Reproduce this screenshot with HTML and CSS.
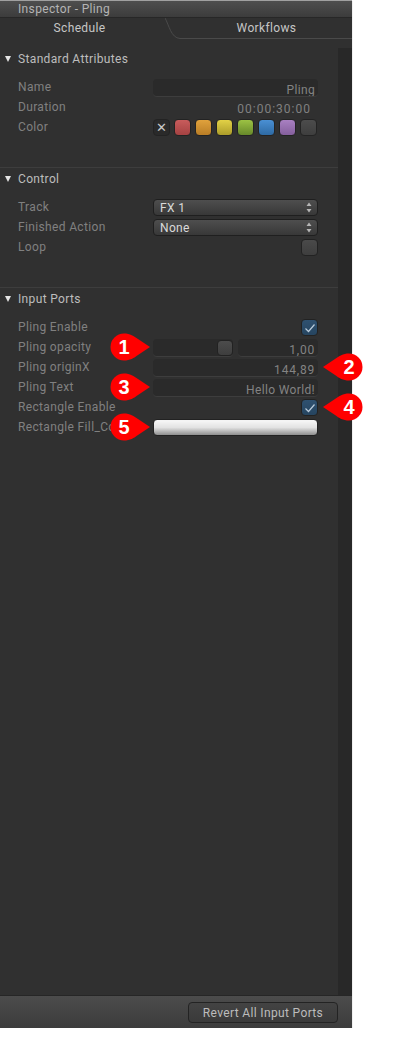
FILE: index.html
```html
<!DOCTYPE html>
<html lang="en">
<head>
  <meta charset="UTF-8">
  <meta name="viewport" content="width=device-width, initial-scale=1.0">
  <title>Inspector - Pling</title>
  <link rel="stylesheet" href="styles.css">
</head>
<body>

<div class="panel">
  <div class="titlebar">Inspector - Pling</div>

  <div class="tabs">
    <div class="tab tab-active">Schedule</div>
    <svg class="tab-curve" width="16" height="21" viewBox="0 0 16 21"><path d="M0 0 C4 7 6 20 15 20.5 L16 20.5" fill="none" stroke="#4a4a4a"/></svg>
    <div class="tab tab-other">Workflows</div>
  </div>

  <div class="content">
    <div class="main">
      <section class="section">
        <h3 class="section-head"><span class="arrow"></span>Standard Attributes</h3>
        <div class="row">
          <span class="label">Name</span>
          <div class="field">Pling</div>
        </div>
        <div class="row">
          <span class="label">Duration</span>
          <div class="timecode">00:00:30:00</div>
        </div>
        <div class="row">
          <span class="label">Color</span>
          <div class="swatches">
            <div class="swatch swatch-none">✕</div>
            <div class="swatch swatch-red"></div>
            <div class="swatch swatch-orange"></div>
            <div class="swatch swatch-yellow"></div>
            <div class="swatch swatch-green"></div>
            <div class="swatch swatch-blue"></div>
            <div class="swatch swatch-purple"></div>
            <div class="swatch swatch-gray"></div>
          </div>
        </div>
      </section>

      <section class="section">
        <h3 class="section-head"><span class="arrow"></span>Control</h3>
        <div class="row">
          <span class="label">Track</span>
          <div class="select">FX 1
            <svg class="updown" width="6" height="11" viewBox="0 0 6 11"><path d="M3 0.5 L5.5 4 H0.5 Z M3 10.5 L5.5 7 H0.5 Z" fill="#b5b5b5"/></svg>
          </div>
        </div>
        <div class="row">
          <span class="label">Finished Action</span>
          <div class="select">None
            <svg class="updown" width="6" height="11" viewBox="0 0 6 11"><path d="M3 0.5 L5.5 4 H0.5 Z M3 10.5 L5.5 7 H0.5 Z" fill="#b5b5b5"/></svg>
          </div>
        </div>
        <div class="row">
          <span class="label">Loop</span>
          <div class="check"></div>
        </div>
      </section>

      <section class="section section-last">
        <h3 class="section-head"><span class="arrow"></span>Input Ports</h3>
        <div class="row">
          <span class="label">Pling Enable</span>
          <div class="check check-on">
            <svg width="12" height="10" viewBox="0 0 12 10"><path d="M1.5 5.5 L4.5 8.5 L10.5 1.5" fill="none" stroke="#b9cbdb" stroke-width="1.2"/></svg>
          </div>
        </div>
        <div class="row">
          <span class="label">Pling opacity</span>
          <div class="slider">
            <div class="slider-track"><div class="slider-thumb"></div></div>
            <div class="field field-value field-num">1,00</div>
          </div>
        </div>
        <div class="row">
          <span class="label">Pling originX</span>
          <div class="field field-num">144,89</div>
        </div>
        <div class="row">
          <span class="label">Pling Text</span>
          <div class="field">Hello World!</div>
        </div>
        <div class="row">
          <span class="label">Rectangle Enable</span>
          <div class="check check-on">
            <svg width="12" height="10" viewBox="0 0 12 10"><path d="M1.5 5.5 L4.5 8.5 L10.5 1.5" fill="none" stroke="#b9cbdb" stroke-width="1.2"/></svg>
          </div>
        </div>
        <div class="row">
          <span class="label">Rectangle Fill_Color</span>
          <div class="fill-color"></div>
        </div>
      </section>
    </div>
    <div class="scrollbar"></div>
  </div>

  <div class="footer">
    <button class="revert" type="button">Revert All Input Ports</button>
  </div>
</div>

<!-- numbered callouts over the screenshot -->
<div class="callout callout-1"><svg width="42" height="28" viewBox="0 0 42 28"><path d="M14 0.5 C20 0.5 24 3 28 6 L40 14 L28 22 C24 25 20 27.5 14 27.5 A13.5 13.5 0 0 1 14 0.5 Z" fill="#f00"/></svg><span>1</span></div>
<div class="callout callout-2 callout-flip"><svg width="42" height="28" viewBox="0 0 42 28"><path d="M28 0.5 C22 0.5 18 3 14 6 L2 14 L14 22 C18 25 22 27.5 28 27.5 A13.5 13.5 0 0 0 28 0.5 Z" fill="#f00"/></svg><span>2</span></div>
<div class="callout callout-3"><svg width="42" height="28" viewBox="0 0 42 28"><path d="M14 0.5 C20 0.5 24 3 28 6 L40 14 L28 22 C24 25 20 27.5 14 27.5 A13.5 13.5 0 0 1 14 0.5 Z" fill="#f00"/></svg><span>3</span></div>
<div class="callout callout-4 callout-flip"><svg width="42" height="28" viewBox="0 0 42 28"><path d="M28 0.5 C22 0.5 18 3 14 6 L2 14 L14 22 C18 25 22 27.5 28 27.5 A13.5 13.5 0 0 0 28 0.5 Z" fill="#f00"/></svg><span>4</span></div>
<div class="callout callout-5"><svg width="42" height="28" viewBox="0 0 42 28"><path d="M14 0.5 C20 0.5 24 3 28 6 L40 14 L28 22 C24 25 20 27.5 14 27.5 A13.5 13.5 0 0 1 14 0.5 Z" fill="#f00"/></svg><span>5</span></div>

</body>
</html>
```

FILE: styles.css
```css
/* Inspector panel */
body {
  margin: 0;
  background: #fff;
  font-family: Roboto, "Liberation Sans", sans-serif;
  font-size: 12px;
  letter-spacing: 0.35px;
}
.panel {
  width: 352px;
  height: 1028px;
  display: flex;
  flex-direction: column;
  background: #303030;
  box-shadow: 0 1px 1px rgba(0, 0, 0, 0.35);
}
.titlebar {
  height: 16px;
  line-height: 16px;
  padding-left: 18px;
  border-top: 1px solid #a0a0a0;
  background: linear-gradient(#4e4e4e, #3c3c3c);
  color: #b4b4b4;
}
.tabs {
  display: flex;
  height: 21px;
  background: #303030;
  border-top: 1px solid #272727;
  box-sizing: content-box;
}
.tab {
  line-height: 20px;
  text-align: center;
  color: #c6c6c6;
}
.tab-active {
  width: 165px;
  padding-right: 6px;
  box-sizing: border-box;
}
.tab-curve {
  flex: none;
}
.tab-other {
  flex: 1;
  border-bottom: 1px solid #4a4a4a;
}
.content {
  flex: 1;
  display: flex;
  padding-top: 9px;
  min-height: 0;
}
.main {
  width: 338px;
}
.scrollbar {
  width: 14px;
  background: #282828;
}

/* Sections */
.section {
  height: 119px;
  border-bottom: 1px solid #3d3d3d;
}
.section-last {
  border-bottom: none;
}
.section-head {
  height: 24px;
  line-height: 23px;
  margin: 0 0 6px;
  padding-left: 18px;
  position: relative;
  font-size: 12px;
  font-weight: normal;
  color: #bdbdbd;
}
.arrow {
  position: absolute;
  left: 5px;
  top: 8px;
  border-left: 3.5px solid transparent;
  border-right: 3.5px solid transparent;
  border-top: 6px solid #e4e4e4;
}
.row {
  height: 20px;
  display: flex;
  align-items: center;
  justify-content: space-between;
  padding: 0 20px 0 18px;
}
.label {
  padding-bottom: 2px;
  color: #808080;
  white-space: nowrap;
}

/* Controls */
.field {
  width: 165px;
  height: 18px;
  box-sizing: border-box;
  padding: 3px 3px 0 0;
  text-align: right;
  line-height: 17px;
  color: #838383;
  background: #2a2a2a;
  border-radius: 4px;
  border-bottom: 1px solid #3d3d3d;
  overflow: hidden;
}
.field-num {
  letter-spacing: 0.8px;
}
.timecode {
  width: 165px;
  box-sizing: border-box;
  padding: 1px 7px 0 0;
  text-align: right;
  letter-spacing: 1px;
  color: #808080;
}
.swatches {
  width: 165px;
  margin-bottom: 1px;
  display: flex;
  gap: 4px;
}
.swatch {
  width: 17px;
  height: 17px;
  box-sizing: border-box;
  border: 1px solid #232323;
  border-radius: 4px;
}
.swatch-none {
  background: #2a2a2a;
  color: #c8c8c8;
  font-size: 13px;
  line-height: 15px;
  text-align: center;
  letter-spacing: 0;
}
.swatch-red { background: linear-gradient(#c85c5c, #a54242); }
.swatch-orange { background: linear-gradient(#e0a23c, #b97d26); }
.swatch-yellow { background: linear-gradient(#e2d146, #ac9d2a); }
.swatch-green { background: linear-gradient(#9cc244, #67892a); }
.swatch-blue { background: linear-gradient(#4a90d4, #2e6aa4); }
.swatch-purple { background: linear-gradient(#a980c2, #845f9c); }
.swatch-gray { background: linear-gradient(#4c4c4c, #3e3e3e); }

.select {
  width: 165px;
  height: 17px;
  margin-bottom: 1px;
  box-sizing: border-box;
  display: flex;
  align-items: center;
  justify-content: space-between;
  padding: 0 5px 0 6px;
  color: #dadada;
  background: linear-gradient(#4e4e4e, #383838);
  border: 1px solid #1f1f1f;
  border-radius: 4px;
}
.updown {
  flex: none;
}
.check {
  width: 17px;
  height: 17px;
  margin-left: auto;
  margin-bottom: 1px;
  box-sizing: border-box;
  display: flex;
  align-items: center;
  justify-content: center;
  background: linear-gradient(#4a4a4a, #3e3e3e);
  border: 1px solid #222;
  border-radius: 4px;
}
.check-on {
  background: linear-gradient(#2f5170, #264560);
}
.slider {
  width: 165px;
  display: flex;
  gap: 5px;
}
.slider-track {
  flex: 1;
  height: 18px;
  display: flex;
  justify-content: flex-end;
  align-items: center;
  background: #2a2a2a;
  border-radius: 4px;
  border-bottom: 1px solid #3d3d3d;
  box-sizing: border-box;
}
.slider-thumb {
  width: 16px;
  height: 16px;
  box-sizing: border-box;
  background: linear-gradient(#4c4c4c, #3e3e3e);
  border: 1px solid #222;
  border-radius: 4px;
}
.field-value {
  width: 80px;
}
.fill-color {
  width: 165px;
  height: 17px;
  margin-bottom: 1px;
  box-sizing: border-box;
  background: linear-gradient(#f4f4f4 10%, #e2e2e2 50%, #8e8e8e);
  border: 1px solid #222;
  border-radius: 4px;
}

/* Footer */
.footer {
  height: 33px;
  display: flex;
  justify-content: flex-end;
  padding: 6px 14px 0 0;
  box-sizing: border-box;
  background: linear-gradient(#4c4c4c, #3c3c3c);
  border-top: 1px solid #262626;
}
.revert {
  width: 150px;
  height: 21px;
  padding: 0;
  font: inherit;
  letter-spacing: inherit;
  color: #bcbcbc;
  background: linear-gradient(#434343, #3a3a3a);
  border: 1px solid #232323;
  border-radius: 4px;
}

/* Callouts */
.callout {
  position: absolute;
  width: 42px;
  height: 28px;
}
.callout svg {
  display: block;
}
.callout span {
  position: absolute;
  left: 0;
  top: 0;
  width: 28px;
  line-height: 28px;
  text-align: center;
  font-family: "Liberation Sans", sans-serif;
  font-size: 20px;
  font-weight: bold;
  letter-spacing: 0;
  color: #fff;
}
.callout-flip span {
  left: 14px;
}
.callout-1 { left: 110px; top: 333px; }
.callout-2 { left: 321px; top: 353px; }
.callout-3 { left: 110px; top: 373px; }
.callout-4 { left: 321px; top: 393px; }
.callout-5 { left: 110px; top: 413px; }
```
